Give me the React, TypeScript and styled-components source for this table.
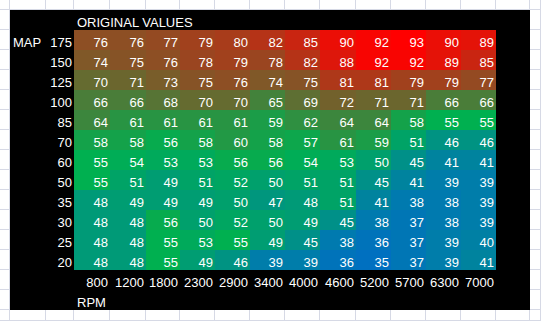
import React from 'react';
import styled, { createGlobalStyle } from 'styled-components';

const GlobalStyle = createGlobalStyle`
  html, body {
    margin: 0;
    padding: 0;
    background: #ffffff;
    overflow: hidden;
  }
`;

const rpm = [800, 1200, 1800, 2300, 2900, 3400, 4000, 4600, 5200, 5700, 6300, 7000];

const table: [number, number[]][] = [
  [175, [76, 76, 77, 79, 80, 82, 85, 90, 92, 93, 90, 89]],
  [150, [74, 75, 76, 78, 79, 78, 82, 88, 92, 92, 89, 85]],
  [125, [70, 71, 73, 75, 76, 74, 75, 81, 81, 79, 79, 77]],
  [100, [66, 66, 68, 70, 70, 65, 69, 72, 71, 71, 66, 66]],
  [85, [64, 61, 61, 61, 61, 59, 62, 64, 64, 58, 55, 55]],
  [70, [58, 58, 56, 58, 60, 58, 57, 61, 59, 51, 46, 46]],
  [60, [55, 54, 53, 53, 56, 56, 54, 53, 50, 45, 41, 41]],
  [50, [55, 51, 49, 51, 52, 50, 51, 51, 45, 41, 39, 39]],
  [35, [48, 49, 49, 49, 50, 47, 48, 51, 41, 38, 38, 39]],
  [30, [48, 48, 56, 50, 52, 50, 49, 45, 38, 37, 38, 39]],
  [25, [48, 48, 55, 53, 55, 49, 45, 38, 36, 37, 39, 40]],
  [20, [48, 48, 55, 49, 46, 39, 39, 36, 35, 37, 39, 41]],
];

// excel style 3 colour scale: lowest / 50th percentile / highest
const all = table.flatMap(([, v]) => v).sort((a, b) => a - b);
const lo = all[0];
const hi = all[all.length - 1];
const pos = (all.length - 1) * 0.5;
const mid = all[Math.floor(pos)] + (all[Math.ceil(pos)] - all[Math.floor(pos)]) * (pos - Math.floor(pos));

const BLUE = [0, 112, 192];
const GREEN = [0, 176, 80];
const RED = [255, 0, 0];

const heat = (v: number) => {
  const [a, b, t] = v <= mid ? [BLUE, GREEN, (v - lo) / (mid - lo)] : [GREEN, RED, (v - mid) / (hi - mid)];
  const c = a.map((x, i) => Math.round(x + (b[i] - x) * t));
  return `rgb(${c.join(',')})`;
};

const COLS = [10, 36, 28, 36, 36, 34, 35, 35, 35, 35, 36, 35, 35, 35, 35, 34];
const ROWS = 17;
const NCOLS = COLS.length + 1;

const Sheet = styled.div`
  display: grid;
  grid-template-columns: ${COLS.map((w) => `${w}px`).join(' ')} 1fr;
  grid-template-rows: 10px repeat(15, 20px) 1fr;
  width: 100vw;
  height: 100vh;
  font-family: 'Liberation Sans', Arial, sans-serif;
  font-size: 13px;
`;

const Blank = styled.div`
  box-sizing: border-box;
  border-right: 1px solid #d6d9e5;
  border-bottom: 1px solid #d6d9e5;
  background: #ffffff;
`;

const Cell = styled.div<{ $fill?: string; $right?: boolean; $span?: number }>`
  box-sizing: border-box;
  display: flex;
  align-items: flex-end;
  justify-content: ${(p) => (p.$right ? 'flex-end' : 'flex-start')};
  padding: 0 2px 0 3px;
  background: ${(p) => p.$fill || '#000000'};
  color: #ffffff;
  line-height: 15px;
  white-space: nowrap;
  overflow: hidden;
  ${(p) => (p.$span ? `grid-column: span ${p.$span};` : '')}
`;

const inBlack = (r: number, c: number) => r >= 1 && r <= 15 && c >= 1 && c <= 15;

const renderCell = (r: number, c: number) => {
  const key = `${r}-${c}`;
  if (!inBlack(r, c)) return <Blank key={key} />;
  if (r === 1) {
    if (c === 3) return <Cell key={key} $span={13}>ORIGINAL VALUES</Cell>;
    if (c > 3) return null;
  }
  if (r >= 2 && r <= 13) {
    const [map, vals] = table[r - 2];
    if (c === 1 && r === 2) return <Cell key={key}>MAP</Cell>;
    if (c === 2) return <Cell key={key} $right>{map}</Cell>;
    if (c >= 3 && c <= 14) {
      const v = vals[c - 3];
      return <Cell key={key} $right $fill={heat(v)}>{v}</Cell>;
    }
  }
  if (r === 14 && c >= 3 && c <= 14) return <Cell key={key} $right>{rpm[c - 3]}</Cell>;
  if (r === 15 && c === 3) return <Cell key={key}>RPM</Cell>;
  return <Cell key={key} />;
};

const App = () => {
  const cells = [];
  for (let r = 0; r < ROWS; r++) {
    for (let c = 0; c < NCOLS; c++) {
      cells.push(renderCell(r, c));
    }
  }
  return (
    <>
      <GlobalStyle />
      <Sheet>{cells}</Sheet>
    </>
  );
};

export default App;
